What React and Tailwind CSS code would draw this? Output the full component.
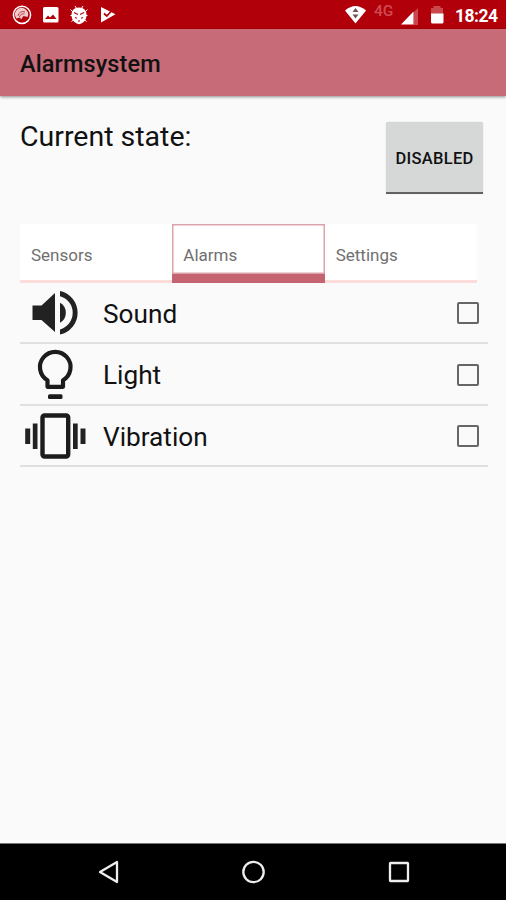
import React, { useState } from 'react';

const SoundIcon = () => (
    <svg width="70" height="60" viewBox="0 0 70 60" fill="#222">
        <path d="M12.5 22.500h9L35 10v39L21.5 37h-9z" />
        <path d="M40 19.700a11.500 11.500 0 0 1 0 20z" />
        <path d="M40 8v5.200a17.200 17.200 0 0 1 0 33.200v5.200a22.300 22.300 0 0 0 0-43.600z" />
    </svg>
);

const LightIcon = () => (
    <svg width="70" height="60" viewBox="0 0 70 60" fill="none" stroke="#1c1c1c" strokeWidth="4.200">
        <path d="M27.500 42.800h15.500v-6.500a15.300 15.300 0 1 0-15.500 0z" strokeLinejoin="round" />
        <rect x="28" y="50.300" width="14.500" height="4.800" rx="1.500" fill="#1c1c1c" stroke="none" />
    </svg>
);

const VibrationIcon = () => (
    <svg width="70" height="60" viewBox="0 0 70 60" fill="#222">
        <rect x="22.500" y="10.500" width="25.700" height="41" rx="2" fill="none" stroke="#1c1c1c" strokeWidth="4.400" />
        <rect x="5.200" y="23.500" width="5" height="15.500" />
        <rect x="12.800" y="18.500" width="4.700" height="25.500" />
        <rect x="53" y="18.500" width="4.700" height="25.500" />
        <rect x="60.500" y="23.500" width="5" height="15.500" />
    </svg>
);

const StatusBar = () => (
    <div className="h-[29px] bg-[#b10009] flex justify-between text-white">
        <svg width="125" height="29" viewBox="0 0 125 29" fill="white">
            <circle cx="22" cy="14.800" r="8.600" fill="none" stroke="white" strokeWidth="1.500" />
            <path d="M16.500 18.500a6.500 6.500 0 1 1 11-1.500l-4-1-2.500 3.500-1-2z" fillOpacity=".8" />
            <path d="M18 16a5 5 0 0 1 7-4M19.500 17a4 4 0 0 1 5-3" fill="none" stroke="#b10009" strokeWidth=".7" />
            <path fillRule="evenodd" d="M44.500 7h12.500a1.500 1.500 0 0 1 1.500 1.500V21a1.500 1.500 0 0 1-1.500 1.500H44.500A1.500 1.500 0 0 1 43 21V8.500A1.500 1.500 0 0 1 44.500 7zM45 19h11.500l-3.500-4.500-3 3-2-2z" />
            <g stroke="white" strokeWidth="1">
                <path d="M75 6l2 3M83 6l-2 3M70.500 9.500l3 3M87.500 9.500l-3 3M70.500 15.500h3M87.500 15.500h-3M71.500 21.500l3-2.500M86.500 21.500l-3-2.500" fill="none" />
                <path d="M79 7.500c4.800 0 7.500 3 7.500 7.500s-2.700 8.300-7.500 9.300c-4.800-1-7.500-4.800-7.500-9.300S74.200 7.500 79 7.500z" stroke="none" />
            </g>
            <path d="M74 12.500l4 2M84 12.500l-4 2M75 17.500l2 .7M83 17.500l-2 .7M78 21h2" fill="none" stroke="#b10009" strokeWidth="1.100" />
            <path d="M101 7l14.500 7.200L101 22.500z" />
            <path d="M104 13.500l2.800 2.500 5.500-6" fill="none" stroke="#b10009" strokeWidth="1.700" />
        </svg>
        <div className="flex">
            <svg width="30" height="29" viewBox="0 0 30 29">
                <path d="M5 10.500q10.500-9 21 0L15.500 23.500z" fill="white" />
                <path d="M15.500 8l3 4h-6zM15.500 18.500l3-4h-6z" fill="#6b5552" />
            </svg>
            <span className="w-[22px] ml-[4px] mt-[2px] text-[15.500px] leading-[18px] font-medium text-[#d04a50]">4G</span>
            <svg width="54" height="29" viewBox="396 0 54 29">
                <path d="M413.500 12.500l4.500-4.500v17h-4.500z" fill="#c9474d" />
                <path d="M401 24.500L413.500 11.500v13z" fill="white" />
                <path d="M433.500 8V6h7v2h2.500v6h-12V8z" fill="#c9474d" />
                <path d="M431 13.500h12.500V22a1.500 1.500 0 0 1-1.500 1.500h-9.500A1.500 1.500 0 0 1 431 22z" fill="white" />
            </svg>
            <span className="w-[51px] ml-[5px] mt-[6px] text-[17.500px] leading-5 font-bold tracking-[-0.500px]">18:24</span>
        </div>
    </div>
);

const TABS = ['Sensors', 'Alarms', 'Settings'];

const ALARMS = [
    { name: 'Sound', icon: SoundIcon },
    { name: 'Light', icon: LightIcon },
    { name: 'Vibration', icon: VibrationIcon },
];

const App = () => {
    const [tab, setTab] = useState('Alarms');
    const [enabled, setEnabled] = useState(false);
    const [active, setActive] = useState({});

    return (
        <div className="h-screen flex flex-col bg-[#fafafa] text-[#111] font-['Roboto',sans-serif] overflow-hidden">
            <StatusBar />
            <header className="h-[67px] shrink-0 px-5 pt-[4px] flex items-center bg-[#c66b77] shadow-[0_1px_3px_rgba(0,0,0,0.45)]">
                <h1 className="text-[23.500px] font-medium tracking-[0.1px]">Alarmsystem</h1>
            </header>

            <main className="flex-1 pl-5 pr-[18px]">
                <div className="h-32 flex justify-between pr-[5px]">
                    <p className="mt-[23px] text-[28.500px] leading-9">Current state:</p>
                    <button
                        onClick={() => setEnabled(!enabled)}
                        className="mt-[26px] w-[97px] h-[72px] pt-[5px] rounded-t-[3px] bg-[#d6d8d7] border-b-2 border-[#606262] text-[16.500px] font-medium tracking-[0.3px] shadow-[0_0_1px_rgba(0,0,0,0.3)]"
                    >
                        {enabled ? 'ENABLED' : 'DISABLED'}
                    </button>
                </div>

                <div className="w-[457px] h-[59px] grid grid-cols-3 bg-white">
                    {TABS.map((name) => (
                        <button
                            key={name}
                            onClick={() => setTab(name)}
                            className="flex flex-col text-left text-[17px] leading-5 text-[#707070]"
                        >
                            <span
                                className={`w-full flex-1 pl-[11px] pt-[21px] ${
                                    tab === name ? 'shadow-[inset_0_0_0_1.500px_#dda3ab]' : ''
                                }`}
                            >
                                {name}
                            </span>
                            <span className={`w-full ${tab === name ? 'h-[9px] bg-[#c46471]' : 'h-[3px] bg-[#ffdcdc]'}`} />
                        </button>
                    ))}
                </div>

                <ul>
                    {ALARMS.map(({ name, icon: Icon }) => (
                        <li key={name} className="h-[61.400px] flex items-center border-b-2 border-[#e0e0e0]">
                            <Icon />
                            <span className="ml-[13px] flex-1 text-[26.200px] pt-[4px]">{name}</span>
                            <button
                                onClick={() => setActive({ ...active, [name]: !active[name] })}
                                className={`size-[22px] mr-[9px] mt-px rounded-[2px] border-2 border-[#666] ${active[name] ? 'bg-[#c66b77]' : ''}`}
                            />
                        </li>
                    ))}
                </ul>
            </main>

            <nav className="h-[57px] bg-black border-t border-[#777]">
                <svg width="506" height="56" viewBox="0 844 506 56" fill="none" stroke="#eee" strokeWidth="2.300" strokeLinejoin="round">
                    <path d="M117 862v20l-17-10z" />
                    <circle cx="253.500" cy="872" r="10.200" />
                    <rect x="390" y="863" width="18" height="18" rx=".5" />
                </svg>
            </nav>
        </div>
    );
};

export default App;
